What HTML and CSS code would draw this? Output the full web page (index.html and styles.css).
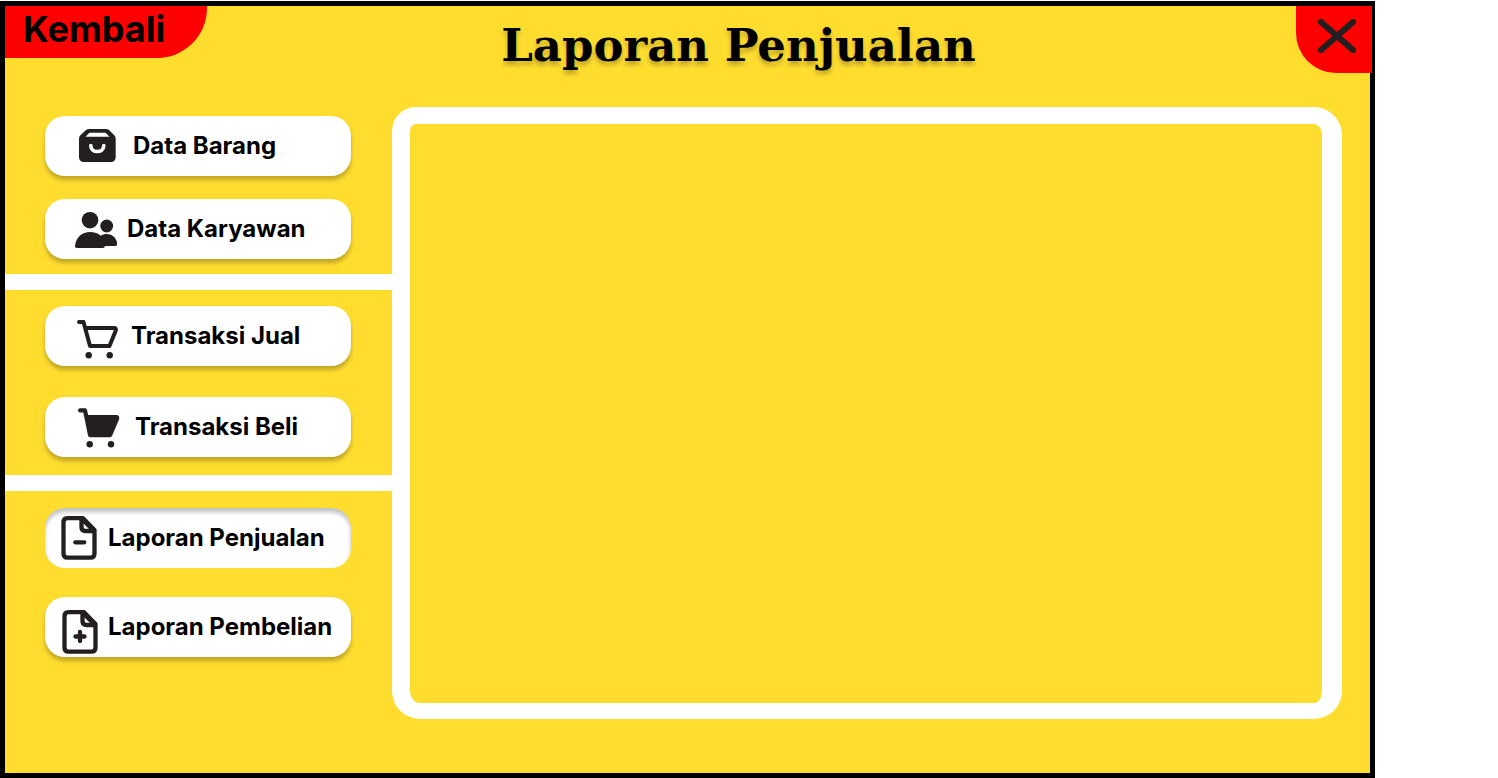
FILE: index.html
```html
<!DOCTYPE html>
<html lang="id">
<head>
<meta charset="utf-8">
<title>Laporan Penjualan</title>
<link rel="stylesheet" href="styles.css">
</head>
<body>
<div class="frame">
  <header class="header">
    <button class="back" type="button">Kembali</button>
    <h1 class="title">Laporan Penjualan</h1>
    <button class="close" type="button" aria-label="Tutup">
      <svg width="40" height="34" viewBox="0 0 40 34" fill="none" stroke="#231f20" stroke-width="6.200" stroke-linecap="round"><path d="M4 3L36 31M36 3L4 31"/></svg>
    </button>
  </header>
  <div class="body">
    <nav class="sidebar">
      <div class="group group-data">
        <button class="item" type="button">
          <svg width="50" height="48" viewBox="0 0 50 48"><path fill="#231f20" d="M16 7h17c1 0 2 .3 3 1l5 5c1 1 1.700 2.300 1.700 4v18c0 3-2 5-5 5H11c-3 0-5-2-5-5V17c0-1.700.6-3 1.600-4L13 8c1-.7 2-1 3-1z"/><path fill="#fff" d="M16.500 10.700h16L36.500 14.700h-24z"/><path fill="none" stroke="#fff" stroke-width="3.600" stroke-linecap="round" d="M17.800 23.500c0 8 13 8 13 0"/></svg>
          <span>Data Barang</span>
        </button>
        <button class="item" type="button">
          <svg width="44" height="48" viewBox="0 0 44 48" fill="#231f20"><circle cx="17" cy="15.200" r="8.300"/><circle cx="33.700" cy="21" r="6.400"/><path d="M17 27c4.500 0 8 1.300 10.700 3.700 1.800-1.200 3.800-1.700 6-1.700 5.500 0 9.500 3.600 10.600 9.500.2 1.500-.5 2.400-2 2.400H32c-.3 1.300-1 2-2.200 2H4c-1.500 0-2.200-.9-2-2.400C3.400 32 9 27 17 27z"/></svg>
          <span>Data Karyawan</span>
        </button>
      </div>
      <div class="group group-trade">
        <button class="item" type="button">
          <svg width="48" height="48" viewBox="0 0 48 48"><path fill="none" stroke="#231f20" stroke-width="4" stroke-linecap="round" stroke-linejoin="round" d="M6 10h4.500L17 34h19.500l6.300-15.500c.5-1.500-.2-2.400-1.600-2.400H12.500"/><circle cx="15.700" cy="43.200" r="3.200" fill="#231f20"/><circle cx="36.700" cy="43.200" r="3.200" fill="#231f20"/></svg>
          <span>Transaksi Jual</span>
        </button>
        <button class="item" type="button">
          <svg width="52" height="48" viewBox="0 0 52 48" fill="#231f20"><path d="M7 5.300h5c1 0 1.700.5 2 1.600L15.200 12H43c2.800 0 4 2 3 4.500l-6.800 16c-.5 1.200-1.400 1.800-2.500 1.800H17.300c-1.200 0-2-.6-2.300-1.700L10.300 9.500H7c-2.600 0-2.600-4.200 0-4.200z"/><circle cx="16.700" cy="41.300" r="3.200"/><circle cx="38" cy="41.300" r="3.200"/></svg>
          <span>Transaksi Beli</span>
        </button>
      </div>
      <div class="group group-report">
        <button class="item item-active" type="button" aria-current="page">
          <svg width="40" height="48" viewBox="0 0 40 48" fill="none" stroke="#231f20" stroke-width="4.300" stroke-linecap="round" stroke-linejoin="round"><path d="M9.500 4.200H25L36.500 16v23.500c0 2.800-1.300 4.200-4 4.200h-23c-2.700 0-4-1.400-4-4.200v-31c0-2.800 1.300-4.300 4-4.300z"/><path d="M23.500 5v8c0 2.700 1.300 4 4 4h8.500M17.300 28.300h9"/><path d="M25 6l9.500 9.500"/></svg>
          <span>Laporan Penjualan</span>
        </button>
        <button class="item" type="button">
          <svg width="40" height="60" viewBox="0 0 40 60" fill="none" stroke="#231f20" stroke-width="4.300" stroke-linecap="round" stroke-linejoin="round"><g transform="translate(1 11)"><path d="M9.500 4.200H25L36.500 16v23.500c0 2.800-1.300 4.200-4 4.200h-23c-2.700 0-4-1.400-4-4.200v-31c0-2.800 1.300-4.300 4-4.300z"/><path d="M23.500 5v8c0 2.700 1.300 4 4 4h8.500M16.500 28.500h9M21 24v9"/><path d="M25 6l9.500 9.500"/></g></svg>
          <span>Laporan Pembelian</span>
        </button>
      </div>
    </nav>
    <main class="panel"></main>
  </div>
</div>
</body>
</html>
```
FILE: styles.css
```css
* {
  box-sizing: border-box;
}

body {
  margin: 0;
  background: #fff;
  font-family: Inter, "Liberation Sans", sans-serif;
  color: #000;
}

button {
  border: 0;
  padding: 0;
  font: inherit;
  color: inherit;
  cursor: pointer;
}

svg {
  display: block;
  flex: none;
}

.frame {
  display: flex;
  flex-direction: column;
  min-height: calc(100vh - 1px);
  margin: 1px 123px 0 0;
  border: 5px solid #000;
  background: #ffdd2f;
}

.header {
  display: grid;
  grid-template-columns: 202px 1fr 76px;
  align-items: start;
  margin-right: -2px;
  padding-bottom: 34px;
}

.back {
  height: 52px;
  padding: 0 0 6px 18px;
  border-radius: 0 0 50px 0;
  background: #f00;
  font-size: 36px;
  line-height: 44px;
  font-weight: 700;
  text-align: left;
}

.title {
  margin: 0;
  padding: 12px 26px 0 0;
  font-family: "DejaVu Serif", serif;
  font-size: 45px;
  line-height: 55px;
  font-weight: 700;
  text-align: center;
  white-space: nowrap;
  text-shadow: 0 4px 4px rgba(0, 0, 0, 0.25);
}

.close {
  display: flex;
  align-items: center;
  justify-content: center;
  height: 67px;
  padding: 0 0 8px 6px;
  border-radius: 0 0 0 40px;
  background: #f00;
}

.body {
  display: grid;
  grid-template-columns: 387px 1fr;
  flex: 1;
  padding: 0 28px 54px 0;
}

.group {
  display: flex;
  flex-direction: column;
  padding: 16px 41px 18px 40px;
}

.group-data {
  gap: 23px;
  padding-top: 9px;
  padding-bottom: 15px;
  border-bottom: 16px solid #fff;
}

.group-trade {
  gap: 31px;
  border-bottom: 16px solid #fff;
}

.group-report {
  gap: 29px;
  padding-top: 17px;
}

.item {
  display: flex;
  align-items: center;
  gap: 10px;
  height: 60px;
  padding-left: 28px;
  border-radius: 20px;
  background: #fff;
  box-shadow: 0 4px 4px rgba(0, 0, 0, 0.25);
  font-size: 24px;
  line-height: 30px;
  font-weight: 700;
  white-space: nowrap;
}

.group-report .item {
  padding-left: 13px;
}

.item-active {
  box-shadow: inset 0 4px 4px rgba(0, 0, 0, 0.25);
}

.panel {
  border: solid #fff;
  border-width: 17px 20px 16px 18px;
  border-radius: 24px 28px 28px 28px;
}
```
